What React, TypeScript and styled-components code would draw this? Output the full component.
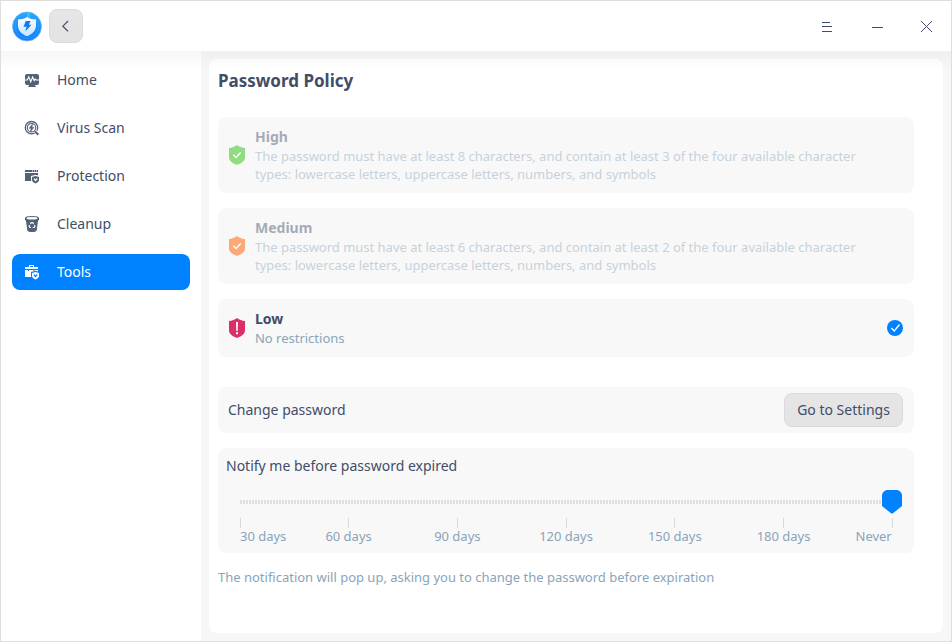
import React from "react";
import styled, { createGlobalStyle } from "styled-components";

const GlobalStyle = createGlobalStyle`
  * { box-sizing: border-box; }
  body {
    margin: 0;
    background: #fff;
    font-family: "Noto Sans", sans-serif;
    font-size: 14px;
    color: #414d68;
  }
  svg { display: block; flex: none; }
`;

const Window = styled.div`
  display: flex;
  flex-direction: column;
  width: 952px;
  height: 642px;
  border: 1px solid #dedede;
  background: #fff;
  overflow: hidden;
`;

const TitleBar = styled.header`
  display: flex;
  align-items: center;
  justify-content: space-between;
  flex: none;
  height: 50px;
  padding: 0 17px 0 10px;
`;

const TitleLeft = styled.div`
  display: flex;
  align-items: center;
  gap: 6px;
`;

const WindowControls = styled.div`
  display: flex;
  align-items: center;
  gap: 36px;
  padding-top: 2px;
`;

const ControlButton = styled.button`
  padding: 0;
  border: 0;
  background: none;
`;

const Button = styled.button<{ $width: number }>`
  display: flex;
  align-items: center;
  justify-content: center;
  width: ${(p) => p.$width}px;
  height: 34px;
  padding: 0;
  border: 1px solid #dadada;
  border-radius: 8px;
  background: linear-gradient(#e6e6e6, #e3e3e3);
  color: #414d68;
  font: inherit;
`;

const Label = styled.span`
  line-height: 18px;
`;

const Body = styled.div`
  position: relative;
  display: flex;
  flex: 1;
  min-height: 0;
  &::before {
    content: "";
    position: absolute;
    inset: 0 0 auto;
    height: 20px;
    background: linear-gradient(rgba(0, 0, 0, 0.03), rgba(0, 0, 0, 0));
    pointer-events: none;
  }
`;

const Sidebar = styled.nav`
  display: flex;
  flex-direction: column;
  gap: 12px;
  width: 200px;
  padding: 11px;
`;

const NavItem = styled.a<{ $active?: boolean }>`
  display: flex;
  align-items: center;
  gap: 17px;
  width: 178px;
  height: 36px;
  padding-left: 12px;
  border-radius: 8px;
  background: ${(p) => (p.$active ? "#0081ff" : "transparent")};
  color: ${(p) => (p.$active ? "#fff" : "#414d68")};
  svg { color: ${(p) => (p.$active ? "#fff" : "#536076")}; }
`;

const Content = styled.main`
  flex: 1;
  padding: 8px;
  background: #f7f7f7;
`;

const Panel = styled.section`
  height: 574px;
  padding: 9px 29px 0 9px;
  border-radius: 8px;
  background: #fff;
`;

const Title = styled.h1`
  height: 49px;
  margin: 0;
  font-size: 17px;
  line-height: 25px;
  font-weight: 700;
`;

const PolicyList = styled.div`
  display: flex;
  flex-direction: column;
  gap: 15px;
`;

const Card = styled.div`
  border-radius: 8px;
  background: #f8f8f8;
`;

const PolicyCard = styled(Card)<{ $height: number }>`
  display: flex;
  align-items: center;
  height: ${(p) => p.$height}px;
  padding: 0 11px;
`;

const PolicyText = styled.div<{ $disabled: boolean }>`
  flex: 1;
  margin-left: 10px;
  opacity: ${(p) => (p.$disabled ? 0.45 : 1)};
`;

const PolicyName = styled.div`
  height: 20px;
  font-weight: 700;
  line-height: 20px;
`;

const PolicyDescription = styled.div`
  width: 622px;
  font-size: 13px;
  line-height: 18px;
  letter-spacing: -0.01px;
  color: #8aa4b8;
`;

const SettingRow = styled(Card)`
  display: flex;
  align-items: center;
  justify-content: space-between;
  height: 46px;
  margin-top: 30px;
  padding: 0 11px 0 10px;
`;

const SliderCard = styled(Card)`
  height: 105px;
  margin-top: 15px;
  padding: 8px 11px 0 8px;
`;

const SliderLabel = styled.div`
  height: 20px;
  line-height: 20px;
`;

const Slider = styled.div`
  display: flex;
  align-items: center;
  height: 24px;
  margin: 14px 1px 4px 14px;
`;

const Track = styled.div`
  flex: 1;
  height: 4px;
  background: repeating-linear-gradient(90deg, #dfdfdf 0 2px, transparent 2px 3px);
`;

const Ticks = styled.div`
  display: grid;
  grid-template-columns: 54.2px repeat(5, 108.75px) 53.8px;
  margin-left: 14px;
  font-size: 13px;
  line-height: 16px;
  letter-spacing: -0.01px;
  color: #8aa4b8;
`;

const Tick = styled.div<{ $align: "flex-start" | "center" | "flex-end" }>`
  display: flex;
  flex-direction: column;
  align-items: ${(p) => p.$align};
  white-space: nowrap;
  &::before {
    content: "";
    width: 1px;
    height: 10px;
    background: #d9d9d9;
  }
  &:last-child::before { margin-right: -1px; }
`;

const Hint = styled.p`
  margin: 15px 0 0;
  font-size: 13px;
  line-height: 18px;
  letter-spacing: -0.005px;
  color: #8aa4b8;
`;

const Logo = () => (
  <svg width="32" height="32" viewBox="0 -0.5 32 32">
    <defs>
      <linearGradient id="disc" x1="0" y1="0" x2="0" y2="1">
        <stop offset="0" stopColor="#28a6fb" />
        <stop offset="1" stopColor="#147bff" />
      </linearGradient>
      <linearGradient id="shield" x1="0" y1="0" x2="0" y2="1">
        <stop offset="0" stopColor="#ffffff" />
        <stop offset="1" stopColor="#c4e4ff" />
      </linearGradient>
    </defs>
    <circle cx="16" cy="16" r="14.500" fill="url(#disc)" stroke="#79b8f5" strokeWidth=".8" />
    <circle cx="16" cy="16" r="12" fill="none" stroke="#2fa4fb" strokeWidth=".6" />
    <path d="M16 1.500A14.500 14.500 0 0 1 19 2v6h-3z" fill="#20c8f3" />
    <path d="M16 6.500c3 2 6 2.400 9 2.400V15c0 5-3.500 8.500-9 10.800C10.500 23.500 7 20 7 15V8.900c3 0 6-.4 9-2.400z" fill="url(#shield)" />
    <path d="M14.800 10.500h4.700l-1.700 3.700h2.700L14.300 21l1.200-4.700h-3z" fill="#087cf0" />
  </svg>
);

const HomeIcon = () => (
  <svg width="16" height="16" viewBox="0 0 16 16">
    <path d="M3 2h10a2 2 0 0 1 2 2v7a2 2 0 0 1-2 2h-2l1 2H4l1-2H3a2 2 0 0 1-2-2V4a2 2 0 0 1 2-2z" fill="currentColor" />
    <path d="M1 8h2.200l1.600-3.200 1.900 4.900 2-4.700 1.500 3.600 1-1.500.9.900H15" fill="none" stroke="#fff" strokeWidth="1.100" />
    <path d="M2 13.500h2.500M11.500 13.500H14" stroke="#fff" />
  </svg>
);

const ScanIcon = () => (
  <svg width="16" height="16" viewBox="0 0 16 16" fill="none" stroke="currentColor">
    <circle cx="7.500" cy="7.700" r="6.200" strokeWidth="1.300" />
    <circle cx="7.500" cy="7.700" r="4.200" strokeWidth="1.100" />
    <path d="M8.700 3.700 5 8.300h2l-.7 3.700L10 7.300H8z" fill="currentColor" stroke="currentColor" strokeWidth=".4" />
    <path d="m11 11.300 3.200 3" stroke="#fff" strokeWidth="3.300" />
    <path d="m10.800 11.300 3.500 3.400" strokeWidth="2" />
  </svg>
);

const BadgeShield = ({ cutout }: { cutout: string }) => (
  <>
    <path d="m11.500 6.800 4.500 1.300v3.500c0 2-2 3.400-4.500 4.400-2.500-1-4.500-2.400-4.500-4.400V8.100z" fill={cutout} />
    <path d="m11.500 7.900 3.500 1v2.800c0 1.900-1.500 2.800-3.500 3.800-2-1-3.500-1.900-3.500-3.800V8.900z" fill="currentColor" />
    <path d="m9.900 10.600 1.600 1.900 1.700-2" fill="none" stroke={cutout} strokeWidth="1.200" />
  </>
);

const ProtectionIcon = () => (
  <svg width="16" height="16" viewBox="0 0 16 16">
    <path d="M1 2h13v2H1zM1 5h13v8H1z" fill="currentColor" />
    <path d="M8 2.500h1v1H8zM10 2.500h1v1h-1zM12 2.500h1v1h-1z" fill="#fff" />
    <BadgeShield cutout="#fff" />
  </svg>
);

const CleanupIcon = () => (
  <svg width="16" height="16" viewBox="0 0 16 16">
    <path d="M1 2Q1 0 8 0t7 2v2l-.9.5-1.400 9.700Q12.500 16 8 16t-4.700-1.800L1.900 4.500 1 4z" fill="currentColor" />
    <ellipse cx="8" cy="2.300" rx="5.600" ry="1.200" fill="#fff" />
    <path d="m6.400 8 .9-1.400h1.400l.9 1.400M10.400 9.100l.6 1.200-.8 1.200H8.700M7 11.500H5.800L5 10.300l.7-1.200" fill="none" stroke="#fff" strokeWidth="1.100" />
  </svg>
);

const ToolsIcon = () => (
  <svg width="16" height="16" viewBox="0 0 16 16">
    <path d="M5.500 3V1.500h4V3" fill="none" stroke="currentColor" strokeWidth="1.100" />
    <path d="M1 3h13v2H1zM1 6h13v7H1z" fill="currentColor" />
    <path d="M4 6h1v1H4zM9.500 6h1v1h-1z" fill="#0081ff" />
    <BadgeShield cutout="#0081ff" />
  </svg>
);

const PolicyShield = ({ color, alert }: { color: string; alert?: boolean }) => (
  <svg width="16" height="20" viewBox="0 0 16 20">
    <path d="M8 0c2.400 1.700 5 2.700 8 3.100v9.200c0 4-4 6.200-8 7.700-4-1.500-8-3.700-8-7.700V3.100C3 2.700 5.600 1.700 8 0z" fill={color} />
    {alert ? (
      <path d="M7 4h2l-.3 9H7.300zM7 14.300h2v2H7z" fill="#fff" />
    ) : (
      <path d="m4.300 9.800 2.700 2.700 4.700-5" fill="none" stroke="#fff" strokeWidth="1.400" />
    )}
  </svg>
);

const SelectedIcon = () => (
  <svg width="16" height="16" viewBox="0 0 16 16">
    <circle cx="8" cy="8" r="8" fill="#0081ff" />
    <path d="m4.300 8 3 3 5.200-6.500" fill="none" stroke="#fff" strokeWidth="1.300" />
  </svg>
);

const SliderHandle = () => (
  <svg width="20" height="24" viewBox="0 0 20 24">
    <path d="M6 0h8c3.500 0 6 2.500 6 6v10l-9 7.200q-1 .8-2 0L0 16V6c0-3.500 2.500-6 6-6z" fill="#0081ff" />
  </svg>
);

const navItems = [
  { label: "Home", Icon: HomeIcon },
  { label: "Virus Scan", Icon: ScanIcon },
  { label: "Protection", Icon: ProtectionIcon },
  { label: "Cleanup", Icon: CleanupIcon },
  { label: "Tools", Icon: ToolsIcon, active: true },
];

const describe = (length: number, kinds: number) =>
  `The password must have at least ${length} characters, and contain at least ${kinds} of the four available character types: lowercase letters, uppercase letters, numbers, and symbols`;

const policies = [
  { name: "High", color: "#8fdd80", text: describe(8, 3), height: 76 },
  { name: "Medium", color: "#fca977", text: describe(6, 2), height: 76 },
  { name: "Low", color: "#db2f69", text: "No restrictions", height: 58, selected: true },
];

const periods = ["30 days", "60 days", "90 days", "120 days", "150 days", "180 days", "Never"];

export default function App() {
  return (
    <>
      <GlobalStyle />
      <Window>
        <TitleBar>
          <TitleLeft>
            <Logo />
            <Button $width={34} aria-label="Back">
              <svg width="10" height="12" viewBox="0 0 10 12">
                <path d="M7 1 1.900 6.200 7 11.400" fill="none" stroke="#414d68" strokeWidth="1.200" />
              </svg>
            </Button>
          </TitleLeft>
          <WindowControls>
            <ControlButton aria-label="Menu">
              <svg width="14" height="14" viewBox="0 0 14 14" shapeRendering="crispEdges">
                <path d="M2 2h8v1H2zM2 6h10v1H2zM2 11h10v1H2z" fill="#414d68" />
              </svg>
            </ControlButton>
            <ControlButton aria-label="Minimize">
              <svg width="14" height="14" viewBox="0 0 14 14" shapeRendering="crispEdges">
                <path d="M2 7h11v1H2z" fill="#414d68" />
              </svg>
            </ControlButton>
            <ControlButton aria-label="Close">
              <svg width="14" height="14" viewBox="0 0 14 14">
                <path d="m1 1 11 11M12 1 1 12" stroke="#414d68" strokeWidth="1" />
              </svg>
            </ControlButton>
          </WindowControls>
        </TitleBar>
        <Body>
          <Sidebar>
            {navItems.map(({ label, Icon, active }) => (
              <NavItem key={label} $active={active}>
                <Icon />
                <Label>{label}</Label>
              </NavItem>
            ))}
          </Sidebar>
          <Content>
            <Panel>
              <Title>Password Policy</Title>
              <PolicyList>
                {policies.map((p) => (
                  <PolicyCard key={p.name} $height={p.height}>
                    <PolicyShield color={p.color} alert={p.selected} />
                    <PolicyText $disabled={!p.selected}>
                      <PolicyName>{p.name}</PolicyName>
                      <PolicyDescription>{p.text}</PolicyDescription>
                    </PolicyText>
                    {p.selected && <SelectedIcon />}
                  </PolicyCard>
                ))}
              </PolicyList>
              <SettingRow>
                <Label>Change password</Label>
                <Button $width={119}>
                  <Label>Go to Settings</Label>
                </Button>
              </SettingRow>
              <SliderCard>
                <SliderLabel>Notify me before password expired</SliderLabel>
                <Slider>
                  <Track />
                  <SliderHandle />
                </Slider>
                <Ticks>
                  {periods.map((label, i) => (
                    <Tick
                      key={label}
                      $align={i === 0 ? "flex-start" : i === periods.length - 1 ? "flex-end" : "center"}
                    >
                      {label}
                    </Tick>
                  ))}
                </Ticks>
              </SliderCard>
              <Hint>The notification will pop up, asking you to change the password before expiration</Hint>
            </Panel>
          </Content>
        </Body>
      </Window>
    </>
  );
}
